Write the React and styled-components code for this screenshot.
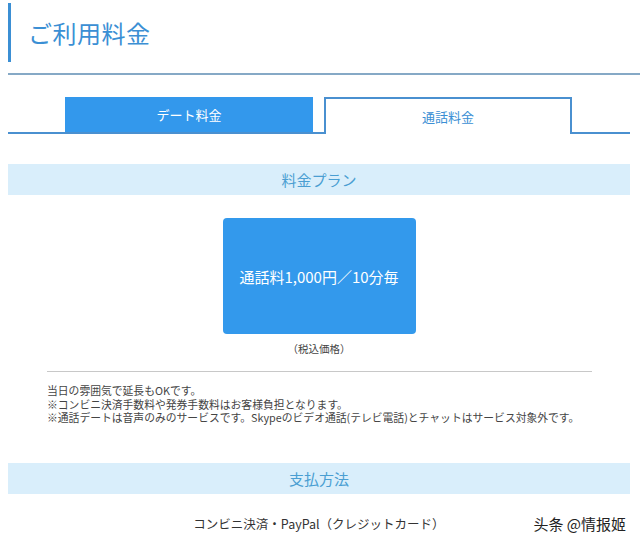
import React from "react";
import styled, { createGlobalStyle } from "styled-components";

const GlobalStyle = createGlobalStyle`
  body {
    margin: 0;
    background: #fff;
    font-family: "Noto Sans CJK JP", "Noto Sans", sans-serif;
    color: #333;
  }
`;

const App = () => {
  return (
    <Page>
      <GlobalStyle />
      <TitleWrap>
        <Title>ご利用料金</Title>
      </TitleWrap>
      <TitleRule />
      <Tabs>
        <Tab>デート料金</Tab>
        <Tab active>通話料金</Tab>
      </Tabs>
      <SectionHead>料金プラン</SectionHead>
      <PlanArea>
        <PlanBox>通話料1,000円／10分毎</PlanBox>
        <TaxNote>（税込価格）</TaxNote>
      </PlanArea>
      <Rule />
      <Notes>
        <p>当日の雰囲気で延長もOKです。</p>
        <p>※コンビニ決済手数料や発券手数料はお客様負担となります。</p>
        <p>※通話デートは音声のみのサービスです。Skypeのビデオ通話(テレビ電話)とチャットはサービス対象外です。</p>
      </Notes>
      <SectionHead gap={38}>支払方法</SectionHead>
      <Footer>
        <Payment>コンビニ決済・PayPal（クレジットカード）</Payment>
        <Mark>头条 @情报姬</Mark>
      </Footer>
    </Page>
  );
};

const Page = styled.div`
  width: 622px;
  margin-left: 8px;
  display: flex;
  flex-direction: column;
`;

const TitleWrap = styled.div`
  margin-top: 3px;
  height: 59px;
  border-left: 3px solid #3b8fd4;
  display: flex;
  align-items: center;
  padding-left: 17px;
`;

const Title = styled.h1`
  margin: 0;
  font-size: 24px;
  font-weight: 400;
  color: #3b8fd4;
  letter-spacing: 0.5px;
`;

const TitleRule = styled.div`
  margin-top: 11px;
  margin-right: -10px;
  border-top: 2px solid #86a9c6;
`;

const Tabs = styled.div`
  margin-top: 22px;
  display: flex;
  gap: 11px;
  padding-left: 57px;
  border-bottom: 2px solid #4a90d0;
`;

const Tab = styled.div`
  width: 248px;
  box-sizing: border-box;
  display: flex;
  align-items: center;
  justify-content: center;
  font-size: 13px;
  margin-bottom: ${(p) => (p.active ? "-2px" : "0")};
  height: ${(p) => (p.active ? "37px" : "35px")};
  background: ${(p) => (p.active ? "#fff" : "#3398ec")};
  color: ${(p) => (p.active ? "#3b8fd4" : "#fff")};
  border: ${(p) => (p.active ? "2px solid #4a90d0" : "none")};
  border-bottom: none;
`;

const SectionHead = styled.div`
  margin-top: ${(p) => p.gap || 30}px;
  height: 31px;
  background: #d9eefb;
  display: flex;
  align-items: center;
  justify-content: center;
  font-size: 15px;
  color: #4a9ed2;
`;

const PlanArea = styled.div`
  display: flex;
  flex-direction: column;
  align-items: center;
  padding-top: 23px;
`;

const PlanBox = styled.div`
  width: 193px;
  height: 116px;
  border-radius: 4px;
  background: #3399ec;
  color: #fff;
  font-size: 15px;
  display: flex;
  align-items: center;
  justify-content: center;
`;

const TaxNote = styled.div`
  margin-top: 7px;
  font-size: 10.5px;
  color: #444;
`;

const Rule = styled.div`
  margin: 15px 38px 0 39px;
  border-top: 1px solid #c8c8c8;
`;

const Notes = styled.div`
  margin: 12px 0 0 39px;
  font-size: 10.8px;
  line-height: 13.5px;
  color: #444;
  p {
    margin: 0;
    white-space: nowrap;
  }
`;

const Footer = styled.div`
  margin-top: 19px;
  display: flex;
  align-items: center;
  justify-content: center;
  position: relative;
  height: 22px;
`;

const Payment = styled.div`
  font-size: 12.5px;
  color: #333;
`;

const Mark = styled.div`
  position: absolute;
  right: 4px;
  top: 0;
  font-family: "Noto Sans CJK SC", sans-serif;
  font-size: 15px;
  color: #222;
`;

export default App;
